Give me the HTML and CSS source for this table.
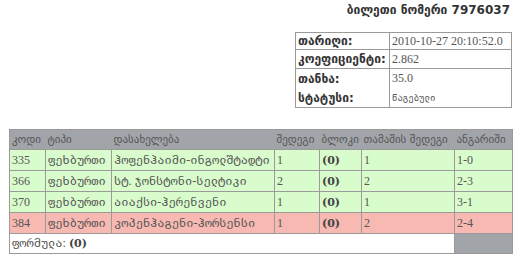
FILE: index.html
```html
<!DOCTYPE html>
<html>
<head>
<meta charset="utf-8">
<link rel="stylesheet" href="styles.css">
</head>
<body>
<div class="page">
  <div class="ticket-title">ბილეთი ნომერი 7976037</div>
  <div class="info-wrap">
    <table class="info">
      <tr class="line r1"><th>თარიღი:</th><td>2010-10-27 20:10:52.0</td></tr>
      <tr class="line r2"><th>კოეფიციენტი:</th><td>2.862</td></tr>
      <tr class="tight"><th>თანხა:</th><td>35.0</td></tr>
      <tr class="tight"><th>სტატუსი:</th><td class="status">წაგებული</td></tr>
    </table>
  </div>
  <table class="bets">
    <colgroup>
      <col class="w-code"><col class="w-type"><col class="w-name"><col class="w-res"><col class="w-blk"><col class="w-game"><col class="w-score">
    </colgroup>
    <thead>
      <tr>
        <th>კოდი</th>
        <th>ტიპი</th>
        <th>დასახელება</th>
        <th>შედეგი</th>
        <th>ბლოკი</th>
        <th>თამაშის შედეგი</th>
        <th>ანგარიში</th>
      </tr>
    </thead>
    <tbody>
      <tr class="win"><td>335</td><td>ფეხბურთი</td><td>ჰოფენჰაიმი-ინგოლშტადტი</td><td>1</td><td><b>(0)</b></td><td>1</td><td>1-0</td></tr>
      <tr class="win"><td>366</td><td>ფეხბურთი</td><td>სტ. ჯონსტონი-სელტიკი</td><td>2</td><td><b>(0)</b></td><td>2</td><td>2-3</td></tr>
      <tr class="win"><td>370</td><td>ფეხბურთი</td><td>აიაქსი-ჰერენვენი</td><td>1</td><td><b>(0)</b></td><td>1</td><td>3-1</td></tr>
      <tr class="lose"><td>384</td><td>ფეხბურთი</td><td>კოპენჰაგენი-ჰორსენსი</td><td>1</td><td><b>(0)</b></td><td>2</td><td>2-4</td></tr>
      <tr class="formula"><td colspan="6">ფორმულა: <b>(0)</b></td><td class="blank"></td></tr>
    </tbody>
  </table>
</div>
</body>
</html>
```
FILE: styles.css
```css
html, body {
  margin: 0;
  padding: 0;
  background: #ffffff;
}
body {
  padding: 3px 7px 0 9px;
  font-family: "Liberation Serif", "DejaVu Sans Mono", serif;
  font-size: 12px;
  color: #555555;
}
.page {
  display: flex;
  flex-direction: column;
}
.ticket-title {
  text-align: right;
  padding-right: 2px;
  font-family: "DejaVu Sans", sans-serif;
  font-weight: bold;
  font-size: 12px;
  color: #333333;
  line-height: 14px;
}
.info-wrap {
  display: flex;
  justify-content: flex-end;
  margin-top: 15px;
}
.info {
  border-collapse: collapse;
  border: 1px solid #9a9a9a;
  width: 217px;
  table-layout: fixed;
}
.info th {
  font-family: "DejaVu Sans", sans-serif;
  font-weight: bold;
  font-size: 12px;
  color: #333333;
  text-align: left;
  width: 90px;
  padding: 0 1px 0 2px;
  border-right: 1px solid #9a9a9a;
  white-space: nowrap;
}
.info td {
  padding: 0 2px;
  white-space: nowrap;
}
.info tr.line th, .info tr.line td {
  border-bottom: 1px solid #9a9a9a;
}
.info tr.r1 th, .info tr.r1 td { height: 16px; }
.info tr.r2 th, .info tr.r2 td { height: 18px; }
.info tr.tight th, .info tr.tight td { height: 19px; }
.info td.status {
  font-family: "DejaVu Sans Mono", monospace;
  font-size: 9px;
}
.bets {
  margin-top: 21px;
  border-collapse: collapse;
  table-layout: fixed;
  width: 503px;
  border: 1px solid #9a9a9a;
}
.w-code { width: 36px; }
.w-type { width: 66px; }
.w-name { width: 163px; }
.w-res { width: 45px; }
.w-blk { width: 42px; }
.w-game { width: 93px; }
.w-score { width: 58px; }
.bets th {
  background: #a1a5a9;
  font-weight: normal;
  text-align: left;
  height: 19px;
  padding: 0 0 0 2px;
  font-family: "DejaVu Sans", sans-serif;
  font-size: 11px;
  color: #555555;
  white-space: nowrap;
}
.bets td {
  height: 20px;
  padding: 0 2px;
  border: 1px solid #9a9a9a;
  white-space: nowrap;
  overflow: hidden;
}
.bets b {
  font-family: "DejaVu Serif", serif;
  font-weight: bold;
  font-size: 11px;
  color: #444444;
}
tr.win td { background: #d9fccc; }
tr.lose td { background: #f7b9b1; }
tr.formula td { background: #ffffff; height: 19px; }
tr.formula td.blank { background: #a1a5a9; }
```
